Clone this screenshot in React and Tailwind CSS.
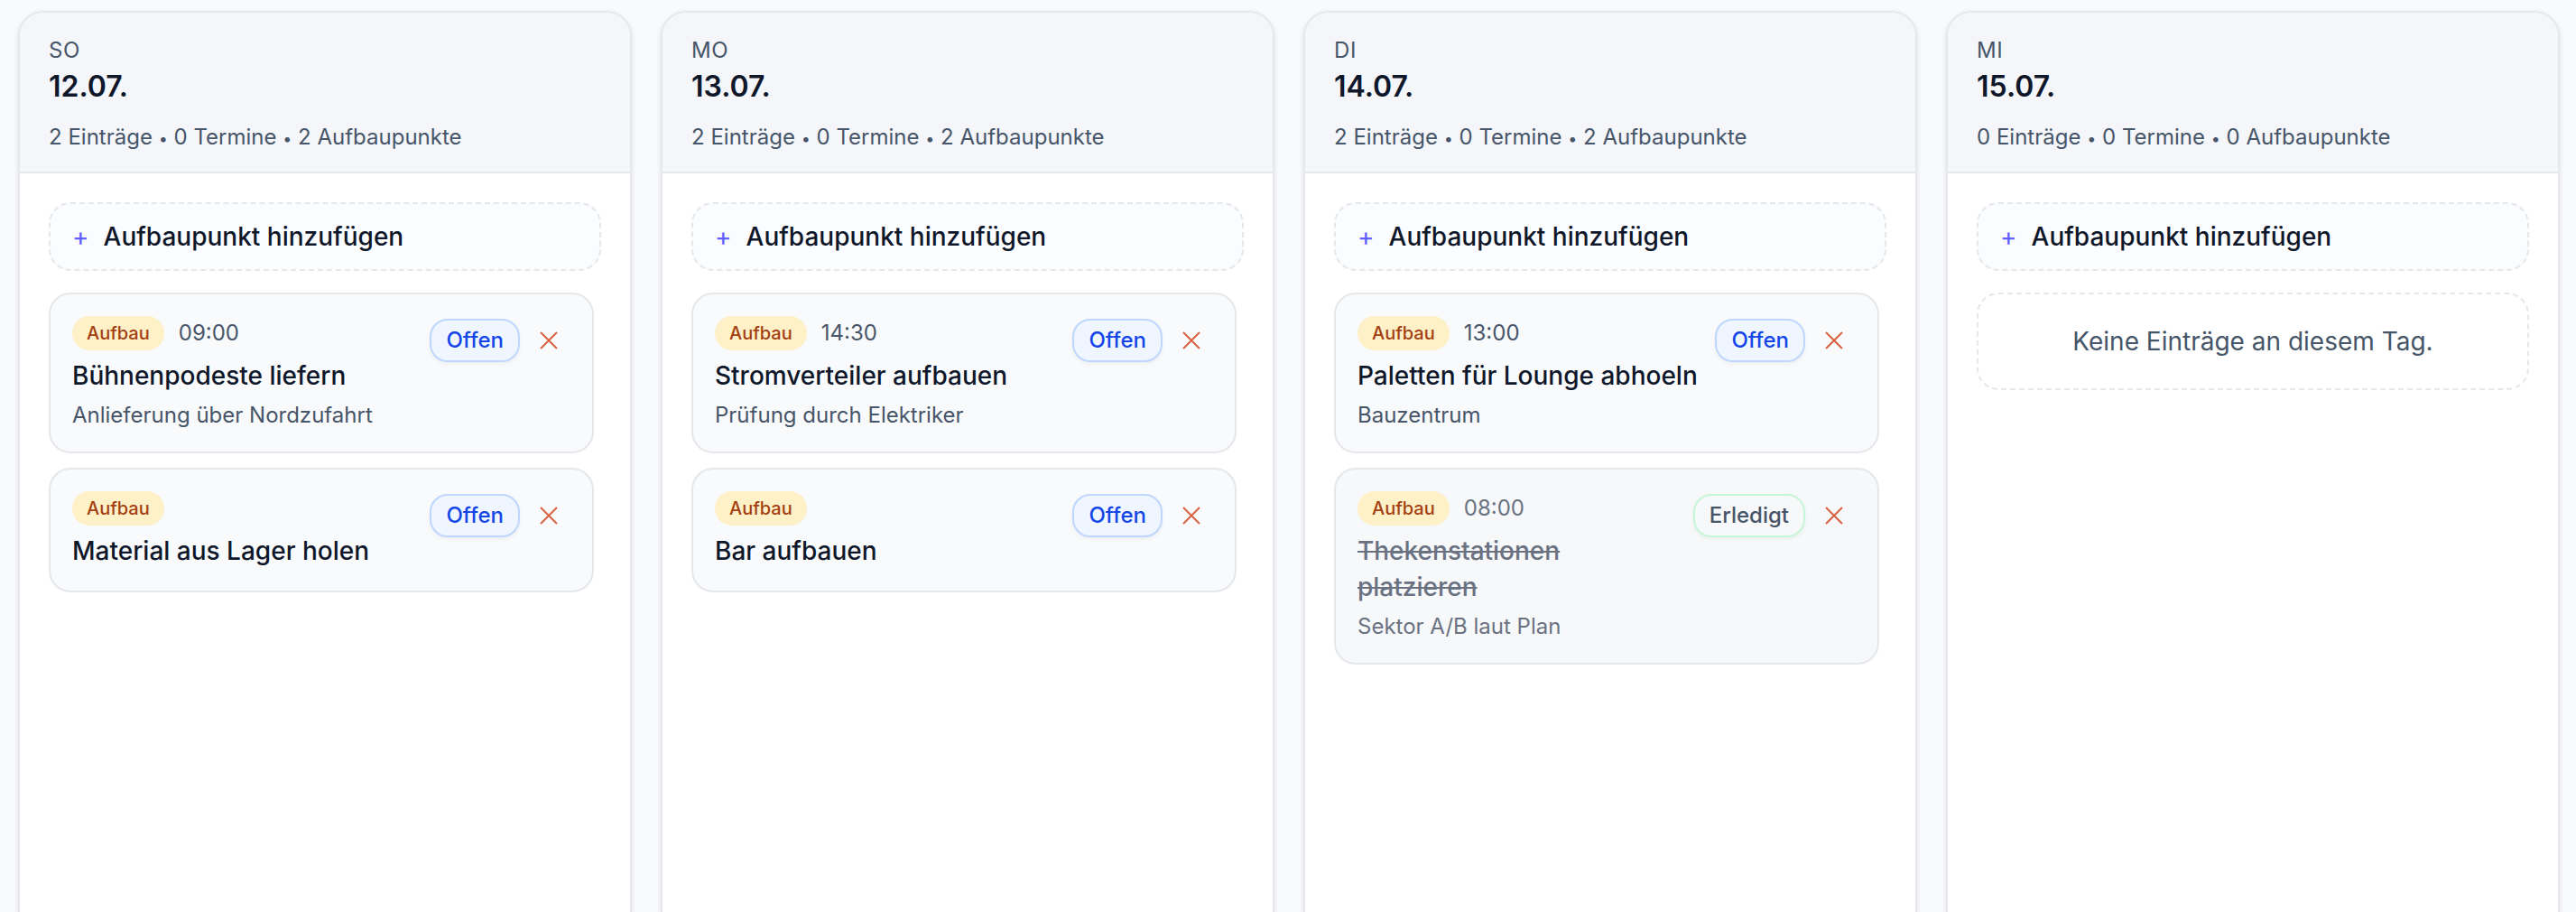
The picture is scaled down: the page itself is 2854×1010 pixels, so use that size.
import { useState } from 'react'
import clsx from 'clsx'

const initialDays = [
  {
    weekday: 'So',
    date: '12.07.',
    items: [
      { id: 1, time: '09:00', title: 'Bühnenpodeste liefern', note: 'Anlieferung über Nordzufahrt' },
      { id: 2, title: 'Material aus Lager holen' },
    ],
  },
  {
    weekday: 'Mo',
    date: '13.07.',
    items: [
      { id: 3, time: '14:30', title: 'Stromverteiler aufbauen', note: 'Prüfung durch Elektriker' },
      { id: 4, title: 'Bar aufbauen' },
    ],
  },
  {
    weekday: 'Di',
    date: '14.07.',
    items: [
      { id: 5, time: '13:00', title: 'Paletten für Lounge abhoeln', note: 'Bauzentrum' },
      { id: 6, time: '08:00', title: 'Thekenstationen platzieren', note: 'Sektor A/B laut Plan', done: true },
    ],
  },
  { weekday: 'Mi', date: '15.07.', items: [] },
]

function CrossIcon() {
  return (
    <svg className="h-5 w-5" viewBox="0 0 20 20" fill="none" stroke="currentColor" strokeWidth="2" aria-hidden="true">
      <path d="M1 1l18 18M19 1L1 19" />
    </svg>
  )
}

function Dot() {
  return <span className="text-[18px] leading-none">•</span>
}

function SetupItem({ item, onToggle, onRemove }) {
  return (
    <li
      className={clsx(
        'flex items-start justify-between gap-4 rounded-[24px] border-2 border-[#e5e7eb] p-6',
        item.done ? 'bg-[#f7f8fa]' : 'bg-[#f9fafc]'
      )}
    >
      <div className="min-w-0">
        <div className="flex items-center gap-4">
          <span className="rounded-full bg-[#fef0c7] px-4 text-[20px] leading-[38px] font-medium text-[#a33f12]">
            Aufbau
          </span>
          {item.time && (
            <time className={clsx('text-[24px] leading-[38px]', item.done ? 'text-[#6a7282]' : 'text-[#475569]')}>
              {item.time}
            </time>
          )}
        </div>
        <h3
          className={clsx(
            'mt-2 text-[28px] leading-10 font-medium',
            item.done ? 'text-[#6a7282] line-through' : 'text-[#0f172a]'
          )}
        >
          {item.title}
        </h3>
        {item.note && (
          <p className={clsx('mt-2 text-[24px] leading-8', item.done ? 'text-[#6a7282]' : 'text-[#475569]')}>
            {item.note}
          </p>
        )}
      </div>

      <div className="flex shrink-0 items-center gap-2">
        <button
          type="button"
          onClick={onToggle}
          className={clsx(
            'h-12 rounded-[20px] border-2 px-4 text-[24px] leading-8 font-medium shadow-[0_2px_4px_rgba(0,0,0,0.05)]',
            item.done ? 'border-[#c6f6d8] text-[#475569]' : 'border-[#bfd7fe] bg-[#eff6ff] text-[#1447e6]'
          )}
        >
          {item.done ? 'Erledigt' : 'Offen'}
        </button>
        <button
          type="button"
          onClick={onRemove}
          aria-label={`${item.title} löschen`}
          className="flex h-[54px] w-12 items-center justify-center text-[#d9623f]"
        >
          <CrossIcon />
        </button>
      </div>
    </li>
  )
}

function DayColumn({ day, onToggle, onRemove }) {
  const count = day.items.length

  return (
    <section className="overflow-hidden rounded-t-[28px] border-2 border-b-0 border-[#e5e7eb] bg-white shadow-[0_2px_6px_rgba(15,23,42,0.1)]">
      <header className="border-b-2 border-[#e5e7eb] bg-[#f4f6fa] px-8 pt-[26px] pb-[22px]">
        <p className="text-[24px] leading-8 tracking-wide text-[#475569] uppercase">{day.weekday}</p>
        <h2 className="text-[32px] leading-[48px] font-semibold text-[#0f172a]">{day.date}</h2>
        <p className="mt-4 text-[24px] leading-8 text-[#475569]">
          {count} Einträge <Dot /> 0 Termine <Dot /> {count} Aufbaupunkte
        </p>
      </header>

      <div className="flex flex-col gap-6 p-8">
        <button
          type="button"
          className="flex items-center gap-4 rounded-[24px] border-2 border-dashed border-[#e5e7eb] bg-[#fbfcfe] px-6 py-4 text-left text-[28px] leading-10 font-medium text-[#0f172a]"
        >
          <span className="font-normal text-[#615fff]">+</span>
          Aufbaupunkt hinzufügen
        </button>

        {count > 0 ? (
          <ul className="flex flex-col gap-4 pr-2">
            {day.items.map((item) => (
              <SetupItem
                key={item.id}
                item={item}
                onToggle={() => onToggle(item.id)}
                onRemove={() => onRemove(item.id)}
              />
            ))}
          </ul>
        ) : (
          <p className="rounded-[24px] border-2 border-dashed border-[#e5e7eb] px-6 py-8 text-center text-[28px] leading-10 text-[#475569]">
            Keine Einträge an diesem Tag.
          </p>
        )}
      </div>
    </section>
  )
}

export default function App() {
  const [days, setDays] = useState(initialDays)

  const updateItems = (fn) => setDays(days.map((day) => ({ ...day, items: fn(day.items) })))

  const toggleItem = (id) =>
    updateItems((items) => items.map((item) => (item.id === id ? { ...item, done: !item.done } : item)))

  const removeItem = (id) => updateItems((items) => items.filter((item) => item.id !== id))

  return (
    <main className="grid min-h-screen grid-cols-4 gap-8 bg-[#f9fafc] pt-3 pr-[18px] pl-5 font-['Inter',sans-serif]">
      {days.map((day) => (
        <DayColumn key={day.date} day={day} onToggle={toggleItem} onRemove={removeItem} />
      ))}
    </main>
  )
}
